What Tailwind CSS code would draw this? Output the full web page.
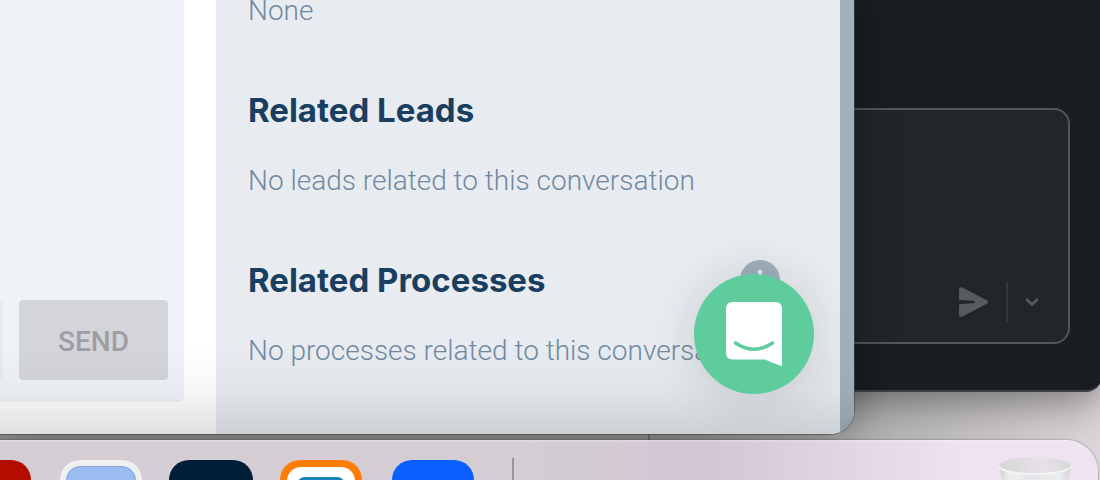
<!DOCTYPE html>
<html lang="en">
<head>
    <meta charset="UTF-8">
    <meta name="viewport" content="width=device-width, initial-scale=1.0">
    <script src="https://cdn.jsdelivr.net/npm/@tailwindcss/browser@4"></script>
    <title>Conversation</title>
</head>

<body class="relative h-screen overflow-hidden bg-linear-to-r from-[#8f8f8f] from-60% to-[#dad5d9] font-['Roboto',sans-serif]">
    <!-- editor window -->
    <section class="absolute top-0 bottom-[88px] left-[648px] -right-0.5 flex flex-col justify-end rounded-br-2xl border-b-2 border-[#3f4043] bg-[#1a1d21] pr-8 pb-[46px] shadow-[0_8px_40px_rgba(0,0,0,0.45)]">
        <div class="flex h-[236px] items-end justify-end rounded-2xl border-2 border-[#545655] bg-[#222529] pr-4 pb-5">
            <button class="mr-3 flex size-10 items-center justify-center" aria-label="Send message">
                <svg class="size-8" viewBox="0 0 32 32" fill="#575b5e">
                    <path d="M1 3.500C1 1.600 2.700 .800 4.400 1.600L28.800 14.200C30.400 15.100 30.400 16.900 28.800 17.800L4.400 30.400C2.700 31.200 1 30.400 1 28.500V19.600C1 18.600 1.500 18.100 2.500 18L15 17.300C17.800 17 17.800 15 15 14.700L2.500 14C1.500 13.900 1 13.400 1 12.400Z" />
                </svg>
            </button>
            <span class="h-10 w-0.5 bg-[#353639]"></span>
            <button class="ml-1 flex size-10 items-center justify-center" aria-label="Schedule for later">
                <svg class="size-4" viewBox="0 0 16 16" fill="none" stroke="#575b5e" stroke-width="2.500" stroke-linecap="round" stroke-linejoin="round">
                    <path d="M3 5.500L8 10.500L13 5.500" />
                </svg>
            </button>
        </div>
    </section>
    <div class="absolute bottom-10 left-0 h-3 w-[650px] border-r-2 border-[#6f6f6f] bg-[#8d8e8d]"></div>

    <!-- browser window -->
    <main class="absolute top-0 right-[246px] bottom-[46px] left-0 flex overflow-hidden rounded-br-3xl bg-white shadow-[0_0_0_1px_rgba(70,70,70,0.6),0_0_40px_rgba(0,0,0,0.35)]">
        <div class="mr-8 mb-8 flex w-[184px] shrink-0 items-end gap-4 rounded-br-md bg-[#eff3f8] pr-4 pb-[22px]">
            <input class="h-20 min-w-0 flex-1 rounded-r bg-[#e8ecf1]" type="text" aria-label="Message">
            <button class="h-20 w-[149px] rounded bg-[#d4d5d9] pt-1 text-[28px] font-medium text-[#9d9ea2]">SEND</button>
        </div>
        <aside class="flex min-w-0 flex-1 flex-col justify-end bg-[#e8ecf1] pr-[60px] pb-[63px] pl-8 whitespace-nowrap">
            <p class="text-[28px] leading-10 font-light text-[#7189a1]">None</p>
            <h2 class="mt-[59px] mb-[31px] font-['Inter',sans-serif] text-[33px] leading-10 font-bold text-[#1a3e60]">Related Leads</h2>
            <p class="text-[28px] leading-10 font-light text-[#7189a1]">No leads related to this conversation</p>
            <div class="mt-[59px] mb-[31px] flex items-center justify-between">
                <h2 class="font-['Inter',sans-serif] text-[33px] leading-10 font-bold text-[#1a3e60]">Related Processes</h2>
                <button class="flex size-10 items-center justify-center rounded-full bg-[#a1afbd]" aria-label="Add process">
                    <svg class="size-5" viewBox="0 0 20 20" stroke="#e8ecf1" stroke-width="4">
                        <path d="M10 0V20M0 10H20" />
                    </svg>
                </button>
            </div>
            <p class="text-[28px] leading-10 font-light text-[#7189a1]">No processes related to this conversation</p>
        </aside>
        <div class="w-3.5 bg-[#a1b1be]"></div>
        <div class="pointer-events-none absolute inset-x-0 bottom-0 h-[90px] bg-linear-to-b from-transparent via-black/3 to-black/12"></div>
        <button class="absolute right-10 bottom-10 flex size-[120px] items-center justify-center rounded-full bg-[#5fcc9e] shadow-[0_2px_50px_rgba(0,0,0,0.15)]" aria-label="Open chat">
            <svg class="h-16 w-14" viewBox="0 0 56 64">
                <path fill="#fff" d="M7 0H49Q56 0 56 7V64Q47 61.500 39 57.500H7Q0 57.500 0 50.500V7Q0 0 7 0Z" />
                <path fill="none" stroke="#5fcc9e" stroke-width="3.500" stroke-linecap="round" d="M9.500 41Q28 53.500 46.500 41" />
            </svg>
        </button>
    </main>

    <!-- dock -->
    <nav class="absolute right-0.5 bottom-0 left-0 flex h-10 items-start overflow-hidden rounded-tr-[32px] border-t-2 border-white/20 bg-linear-to-r from-[#d4ced4] from-45% via-[#d2c7d4] via-65% to-[#efe3f1] to-88% pt-[18px] shadow-[0_0_2px_rgba(0,0,0,0.5)]">
        <div class="-ml-[53px] h-[84px] w-[84px] shrink-0 rounded-[20px] bg-[#b50c00]"></div>
        <div class="ml-[29px] h-[84px] w-[82px] shrink-0 rounded-[20px] bg-[#f0f0f0] p-1.5">
            <div class="h-full rounded-[14px] border border-[#86a5d8] bg-[#9bbcf0]"></div>
        </div>
        <div class="ml-[27px] h-[84px] w-[84px] shrink-0 rounded-[20px] bg-[#001e36]"></div>
        <div class="ml-[27px] h-[84px] w-[82px] shrink-0 rounded-[20px] bg-[#ff7c05] p-[7px]">
            <div class="h-full rounded-[14px] bg-white px-2.5 pt-2.5">
                <div class="h-10 rounded-lg bg-[#1780b5]"></div>
            </div>
        </div>
        <div class="ml-[30px] h-[84px] w-[82px] shrink-0 rounded-[20px] bg-[#0a60ff]"></div>
        <span class="-mt-0.5 ml-[38px] h-12 w-0.5 shrink-0 bg-[#99949a]"></span>
        <svg class="-mt-1 mr-[25px] ml-auto h-6 w-[76px] shrink-0" viewBox="0 0 76 24">
            <defs>
                <linearGradient id="bin" x1="0" x2="1">
                    <stop offset="0" stop-color="#d3d3d6" />
                    <stop offset=".15" stop-color="#eceeef" />
                    <stop offset=".5" stop-color="#e3e6e8" />
                    <stop offset=".85" stop-color="#eceeef" />
                    <stop offset="1" stop-color="#d3d3d6" />
                </linearGradient>
                <linearGradient id="inside" x1="0" x2="1">
                    <stop offset="0" stop-color="#d6d5d8" />
                    <stop offset=".6" stop-color="#e7e2e7" />
                    <stop offset="1" stop-color="#d8d7da" />
                </linearGradient>
            </defs>
            <path fill="url(#bin)" d="M2 10L5 24H71L74 10Z" />
            <path fill="url(#inside)" d="M2 10C2 5 18 1 38 1S74 5 74 10C74 14 58 18 38 18S2 14 2 10Z" />
            <path fill="none" stroke="#f6f7f7" stroke-width="1.500" d="M2 10C2 14 18 18 38 18S74 14 74 10" />
        </svg>
    </nav>
</body>

</html>
